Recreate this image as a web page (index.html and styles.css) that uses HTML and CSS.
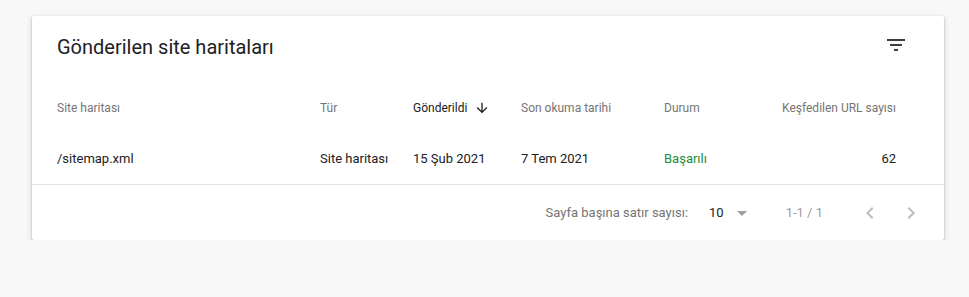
FILE: index.html
```html
<!DOCTYPE html>
<html lang="tr">
<head>
<meta charset="utf-8">
<title>Gönderilen site haritaları</title>
<link rel="stylesheet" href="styles.css">
</head>
<body>
<div class="card">
  <div class="card-head">
    <h2 class="title">Gönderilen site haritaları</h2>
    <button class="icon-btn filter" aria-label="Filtre">
      <svg viewBox="0 0 24 24" width="24" height="24"><path d="M10 18h4v-2h-4v2zM3 6v2h18V6H3zm3 7h12v-2H6v2z"/></svg>
    </button>
  </div>
  <div class="grid head-row">
    <div class="c">Site haritası</div>
    <div class="c">Tür</div>
    <div class="c sorted">Gönderildi
      <svg class="sort-icon" viewBox="0 0 24 24" width="16" height="16"><path d="M20 12l-1.41-1.41L13 16.17V4h-2v12.17l-5.58-5.59L4 12l8 8 8-8z"/></svg>
    </div>
    <div class="c">Son okuma tarihi</div>
    <div class="c">Durum</div>
    <div class="c num">Keşfedilen URL sayısı</div>
  </div>
  <div class="grid data-row">
    <div class="c">/sitemap.xml</div>
    <div class="c">Site haritası</div>
    <div class="c">15 Şub 2021</div>
    <div class="c">7 Tem 2021</div>
    <div class="c ok">Başarılı</div>
    <div class="c num">62</div>
  </div>
  <div class="footer">
    <span class="label">Sayfa başına satır sayısı:</span>
    <span class="select">10</span>
    <svg class="drop" viewBox="0 0 24 24" width="24" height="24"><path d="M7 10l5 5 5-5z"/></svg>
    <span class="range">1-1 / 1</span>
    <svg class="chev prev" viewBox="0 0 24 24" width="24" height="24"><path d="M15.41 7.41L14 6l-6 6 6 6 1.41-1.41L10.83 12z"/></svg>
    <svg class="chev next" viewBox="0 0 24 24" width="24" height="24"><path d="M10 6L8.59 7.41 13.17 12l-4.58 4.59L10 18l6-6z"/></svg>
  </div>
</div>
</body>
</html>
```

FILE: styles.css
```css
* { box-sizing: border-box; }
html, body {
  margin: 0;
  padding: 0;
  background: #f8f8f8;
  font-family: Roboto, "Noto Sans", Arial, sans-serif;
  color: #202124;
}
body {
  padding: 16px 25px 0 32px;
}
.card {
  width: 912px;
  height: 224px;
  background: #fff;
  border-radius: 2px;
  box-shadow: 0 1px 2px rgba(60,64,67,.35), 0 2px 5px 1px rgba(60,64,67,.15);
  display: flex;
  flex-direction: column;
}
.card-head {
  height: 66px;
  display: flex;
  justify-content: space-between;
  align-items: flex-start;
  padding: 18px 36px 0 25px;
}
.title {
  margin: 0;
  font-size: 20px;
  font-weight: 400;
  line-height: 26px;
  color: #202124;
}
.icon-btn {
  border: 0;
  background: none;
  padding: 0;
  margin-top: -1px;
  width: 24px;
  height: 24px;
  fill: #3c4043;
  cursor: pointer;
}
.icon-btn svg { display: block; }
.grid {
  display: grid;
  grid-template-columns: 263px 93px 108px 143px 100px 1fr;
  padding: 0 48px 0 25px;
  align-items: center;
}
.head-row {
  height: 51px;
  font-size: 12px;
  color: #757575;
}
.data-row {
  height: 52px;
  font-size: 13px;
  color: #202124;
  border-bottom: 1px solid #e0e0e0;
}
.c { white-space: nowrap; }
.num { text-align: right; }
.sorted {
  color: #202124;
  display: flex;
  align-items: center;
}
.sort-icon {
  margin-left: 7px;
  fill: #202124;
}
.ok { color: #1e8e3e; }
.footer {
  flex: 1;
  display: flex;
  align-items: center;
  justify-content: flex-end;
  padding: 0 21px 0 0;
  font-size: 13px;
  color: #757575;
}
.select {
  margin-left: 21px;
  font-size: 13px;
  color: #202124;
}
.drop {
  margin-left: 6px;
  fill: #9e9e9e;
}
.range {
  margin-left: 32px;
  font-size: 13px;
  color: #9e9e9e;
}
.chev { fill: #bdbdbd; }
.prev { margin-left: 35px; }
.next { margin-left: 17px; }
```
